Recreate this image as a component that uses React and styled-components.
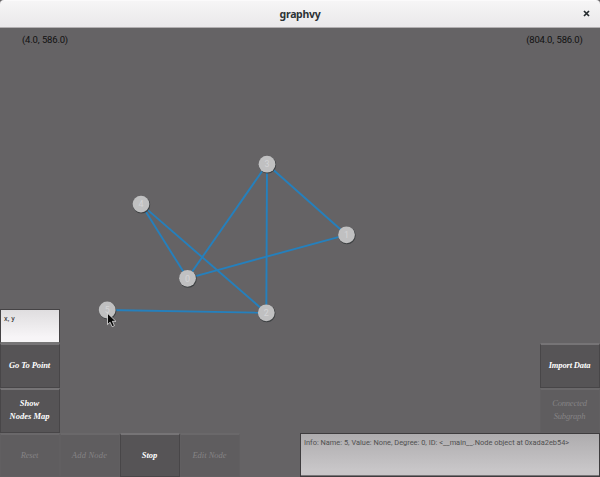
import React from 'react';
import styled, { createGlobalStyle } from 'styled-components';

const GlobalStyle = createGlobalStyle`
  *, *::before, *::after { box-sizing: border-box; }
  body { margin: 0; background: #656365; overflow: hidden; }
`;

const Window = styled.div`
  display: flex;
  flex-direction: column;
  width: 600px;
  height: 477px;
  background: #656365;
  font-family: Roboto, sans-serif;
`;

const TitleBar = styled.header`
  display: grid;
  grid-template-columns: 28px 1fr 28px;
  align-items: center;
  flex: none;
  height: 28px;
  padding-bottom: 1px;
  background: linear-gradient(#f6f5f6, #eae8ea);
  border-top: 1px solid #fbfafb;
  border-bottom: 1px solid #b2afb1;
  border-radius: 4px 4px 0 0;
`;

const Title = styled.h1`
  grid-column: 2;
  margin: 0;
  text-align: center;
  font: bold 10.5px/20px "Noto Sans", "Open Sans", sans-serif;
  letter-spacing: -0.3px;
  color: #2c3235;
`;

const CloseButton = styled.button`
  display: flex;
  align-items: center;
  justify-content: center;
  padding: 0;
  border: 0;
  background: none;
  color: #242a2d;
`;

const Workspace = styled.main`
  position: relative;
  display: flex;
  flex-direction: column;
  flex: 1;
  min-height: 0;
`;

const Coordinates = styled.div`
  display: flex;
  justify-content: space-between;
  padding: 5px 17.5px 0 22px;
  font-size: 9.5px;
  line-height: 14px;
  letter-spacing: -0.2px;
  word-spacing: 0.5px;
  color: #111;
`;

const GraphLayer = styled.svg`
  position: absolute;
  inset: 0;
  pointer-events: none;
`;

const SidePanels = styled.div`
  display: flex;
  justify-content: space-between;
  align-items: flex-end;
  margin-top: auto;
`;

const Panel = styled.div`
  display: flex;
  flex-direction: column;
  width: 60px;
`;

const PointField = styled.textarea`
  display: block;
  width: 60px;
  height: 34px;
  padding: 4px 3px;
  border: 1px solid #454345;
  border-bottom-color: #777;
  background: linear-gradient(#dfdddf, #f7f5f7 85%);
  font: 7.4px/10px Roboto, sans-serif;
  letter-spacing: 0.1px;
  color: #222;
  resize: none;
  overflow: hidden;
`;

const Toolbar = styled.footer`
  display: flex;
  height: 44px;
`;

const Button = styled.button`
  width: 60px;
  height: ${({ $tall }) => ($tall ? 45 : 44)}px;
  padding: 0 1px ${({ $lines }) => ($lines === 2 ? 2 : 1)}px 0;
  border: 1px solid ${({ disabled }) => (disabled ? '#615f61' : '#484648')};
  border-top: 2px solid ${({ disabled }) => (disabled ? '#6a686a' : '#767476')};
  background: ${({ disabled }) => (disabled ? '#5f5d5f' : '#565456')};
  color: ${({ disabled }) => (disabled ? '#858385' : '#fff')};
  font-family: "Liberation Serif", serif;
  font-size: 8.5px;
  font-style: italic;
  font-weight: ${({ disabled }) => (disabled ? 'normal' : 'bold')};
  line-height: 13px;
  letter-spacing: ${({ $track = 0 }) => $track}px;
  white-space: pre-line;
`;

const InfoBox = styled.div`
  width: 300px;
  margin-left: auto;
  padding: 3px;
  border: 1px solid #3e3c3e;
  box-shadow: inset 0 -1px #777577;
  background: linear-gradient(#aeacae, #c8c6c8 85%);
  font-size: 7.4px;
  line-height: 11px;
  letter-spacing: 0.01px;
  color: #505050;
  white-space: nowrap;
`;

const nodes = [
  { id: 0, x: 187.5, y: 250.3 },
  { id: 1, x: 346.5, y: 206.8 },
  { id: 2, x: 266.3, y: 284.8 },
  { id: 3, x: 267, y: 136.2 },
  { id: 4, x: 141, y: 176.1 },
  { id: 5, x: 107.2, y: 282 },
];

const edges = [[4, 0], [4, 2], [3, 0], [3, 2], [3, 1], [1, 0], [5, 2]];

function Graph() {
  return (
    <GraphLayer width="600" height="449" viewBox="0 0 600 449">
      <g stroke="#2580bd" strokeWidth="1.9">
        {edges.map(([a, b]) => (
          <line key={`${a}-${b}`} x1={nodes[a].x} y1={nodes[a].y} x2={nodes[b].x} y2={nodes[b].y} />
        ))}
      </g>
      {nodes.map(({ id, x, y }) => (
        <g key={id}>
          <circle cx={x + 0.5} cy={y + 0.7} r="8.7" fill="#3e4143" />
          <circle cx={x} cy={y} r="8.4" fill="#c0c0c1" />
          <text x={x} y={y + 3.2} textAnchor="middle" fontSize="9" fontFamily="Roboto, sans-serif" fill="#d4d4d6">
            {id}
          </text>
        </g>
      ))}
      <path
        d="M107.5 285.2v11.4l2.6-2.4 2.1 4.5 2.2-1-2-4.4h3.5z"
        fill="#080808"
        stroke="#e6e6e6"
        strokeWidth=".8"
      />
    </GraphLayer>
  );
}

export default function App() {
  return (
    <>
      <GlobalStyle />
      <Window>
        <TitleBar>
          <Title>graphvy</Title>
          <CloseButton aria-label="Close">
            <svg width="7" height="7" viewBox="0 0 7 7">
              <path d="M1 1l5 5M6 1L1 6" stroke="currentColor" strokeWidth="1.7" />
            </svg>
          </CloseButton>
        </TitleBar>
        <Workspace>
          <Graph />
          <Coordinates>
            <span>(4.0, 586.0)</span>
            <span>(804.0, 586.0)</span>
          </Coordinates>
          <SidePanels>
            <Panel>
              <PointField defaultValue="x, y" spellCheck={false} />
              <Button $tall $track={-0.1}>Go To Point</Button>
              <Button $tall $lines={2}>{'Show\nNodes Map'}</Button>
            </Panel>
            <Panel>
              <Button $tall $track={-0.15}>Import Data</Button>
              <Button $tall $lines={2} disabled $track={-0.2}>{'Connected\nSubgraph'}</Button>
            </Panel>
          </SidePanels>
          <Toolbar>
            <Button disabled $track={-0.2}>Reset</Button>
            <Button disabled $track={0.2}>Add Node</Button>
            <Button>Stop</Button>
            <Button disabled>Edit Node</Button>
            <InfoBox>{'Info: Name: 5, Value: None, Degree: 0, ID: <__main__.Node object at 0xada2eb54>'}</InfoBox>
          </Toolbar>
        </Workspace>
      </Window>
    </>
  );
}
